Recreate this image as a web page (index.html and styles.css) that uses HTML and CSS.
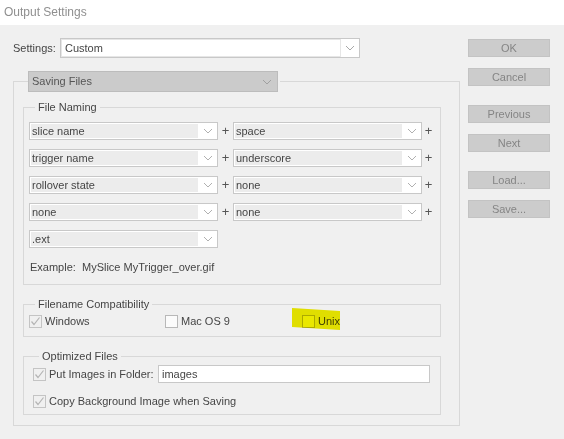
FILE: index.html
```html
<!DOCTYPE html>
<html>
<head>
<meta charset="utf-8">
<link rel="stylesheet" href="styles.css">
</head>
<body>
<div class="titlebar">Output Settings</div>
<div class="main">
  <div class="left">
    <div class="settings-row">
      <span class="settings-label">Settings:</span>
      <div class="combo combo-settings">
        <span class="combo-field">Custom</span>
        <span class="combo-arrow"><svg width="10" height="6" viewBox="0 0 10 6"><polyline points="1,1 5,5 9,1" fill="none" stroke="#a8a8a8" stroke-width="1"/></svg></span>
      </div>
    </div>
    <fieldset class="outer">
      <legend class="outer-legend">
        <div class="combo combo-saving">
          <span class="combo-field">Saving Files</span>
          <span class="combo-arrow"><svg width="10" height="6" viewBox="0 0 10 6"><polyline points="1,1 5,5 9,1" fill="none" stroke="#a0a0a0" stroke-width="1"/></svg></span>
        </div>
      </legend>
      <fieldset class="group naming">
        <legend class="glegend">File Naming</legend>
        <div class="name-grid">
          <div class="combo combo-name"><span class="combo-field">slice name</span><span class="combo-arrow"><svg width="10" height="6" viewBox="0 0 10 6"><polyline points="1,1 5,5 9,1" fill="none" stroke="#b0b0b0" stroke-width="1"/></svg></span></div>
          <span class="plus">+</span>
          <div class="combo combo-name"><span class="combo-field">space</span><span class="combo-arrow"><svg width="10" height="6" viewBox="0 0 10 6"><polyline points="1,1 5,5 9,1" fill="none" stroke="#b0b0b0" stroke-width="1"/></svg></span></div>
          <span class="plus">+</span>

          <div class="combo combo-name"><span class="combo-field">trigger name</span><span class="combo-arrow"><svg width="10" height="6" viewBox="0 0 10 6"><polyline points="1,1 5,5 9,1" fill="none" stroke="#b0b0b0" stroke-width="1"/></svg></span></div>
          <span class="plus">+</span>
          <div class="combo combo-name"><span class="combo-field">underscore</span><span class="combo-arrow"><svg width="10" height="6" viewBox="0 0 10 6"><polyline points="1,1 5,5 9,1" fill="none" stroke="#b0b0b0" stroke-width="1"/></svg></span></div>
          <span class="plus">+</span>

          <div class="combo combo-name"><span class="combo-field">rollover state</span><span class="combo-arrow"><svg width="10" height="6" viewBox="0 0 10 6"><polyline points="1,1 5,5 9,1" fill="none" stroke="#b0b0b0" stroke-width="1"/></svg></span></div>
          <span class="plus">+</span>
          <div class="combo combo-name"><span class="combo-field">none</span><span class="combo-arrow"><svg width="10" height="6" viewBox="0 0 10 6"><polyline points="1,1 5,5 9,1" fill="none" stroke="#b0b0b0" stroke-width="1"/></svg></span></div>
          <span class="plus">+</span>

          <div class="combo combo-name"><span class="combo-field">none</span><span class="combo-arrow"><svg width="10" height="6" viewBox="0 0 10 6"><polyline points="1,1 5,5 9,1" fill="none" stroke="#b0b0b0" stroke-width="1"/></svg></span></div>
          <span class="plus">+</span>
          <div class="combo combo-name"><span class="combo-field">none</span><span class="combo-arrow"><svg width="10" height="6" viewBox="0 0 10 6"><polyline points="1,1 5,5 9,1" fill="none" stroke="#b0b0b0" stroke-width="1"/></svg></span></div>
          <span class="plus">+</span>

          <div class="combo combo-name"><span class="combo-field">.ext</span><span class="combo-arrow"><svg width="10" height="6" viewBox="0 0 10 6"><polyline points="1,1 5,5 9,1" fill="none" stroke="#b0b0b0" stroke-width="1"/></svg></span></div>
        </div>
        <div class="example">Example:&nbsp; MySlice MyTrigger_over.gif</div>
      </fieldset>
      <fieldset class="group compat">
        <legend class="glegend">Filename Compatibility</legend>
        <div class="compat-row">
          <label class="check"><span class="box checked"><svg width="11" height="11" viewBox="0 0 11 11"><polyline points="1.5,5.5 4,8.5 9.5,1.5" fill="none" stroke="#b4b4b4" stroke-width="1.2"/></svg></span>Windows</label>
          <label class="check"><span class="box empty"></span>Mac OS 9</label>
          <label class="check unix"><span class="box empty"></span>Unix<svg class="highlight" width="50" height="24" viewBox="0 0 50 24"><polygon points="0,0 48,3 48,22 0,19" fill="#eeec00"/></svg></label>
        </div>
      </fieldset>
      <fieldset class="group optimized">
        <legend class="glegend">Optimized Files</legend>
        <div class="opt-row">
          <label class="check"><span class="box checked"><svg width="11" height="11" viewBox="0 0 11 11"><polyline points="1.5,5.5 4,8.5 9.5,1.5" fill="none" stroke="#b4b4b4" stroke-width="1.2"/></svg></span>Put Images in Folder:</label>
          <div class="textfield">images</div>
        </div>
        <div class="opt-row2">
          <label class="check"><span class="box checked"><svg width="11" height="11" viewBox="0 0 11 11"><polyline points="1.5,5.5 4,8.5 9.5,1.5" fill="none" stroke="#b4b4b4" stroke-width="1.2"/></svg></span>Copy Background Image when Saving</label>
        </div>
      </fieldset>
    </fieldset>
  </div>
  <div class="buttons">
    <div class="btn">OK</div>
    <div class="btn">Cancel</div>
    <div class="btn sep">Previous</div>
    <div class="btn">Next</div>
    <div class="btn sep">Load...</div>
    <div class="btn">Save...</div>
  </div>
</div>
</body>
</html>
```
FILE: styles.css
```css
* { box-sizing: border-box; }
html, body {
  margin: 0;
  padding: 0;
  background: #f0f0f0;
  width: 564px;
  height: 439px;
  overflow: hidden;
  font-family: "Liberation Sans", Arial, sans-serif;
  font-size: 11px;
  color: #454545;
}
.titlebar {
  height: 25px;
  background: #ffffff;
  color: #8f8f8f;
  font-size: 12px;
  line-height: 24px;
  padding-left: 4px;
}
.main {
  display: flex;
  align-items: flex-start;
}
.left {
  width: 460px;
  padding-left: 13px;
}
.settings-row {
  display: flex;
  align-items: center;
  margin-top: 13px;
  height: 20px;
}
.settings-label {
  width: 47px;
  line-height: 16px;
  white-space: nowrap;
}
.combo {
  display: flex;
  border: 1px solid #c8c8c8;
  background: #ffffff;
  line-height: 14px;
}
.combo-field {
  flex: 1;
  white-space: nowrap;
  overflow: hidden;
}
.combo-arrow {
  display: flex;
  align-items: center;
  justify-content: center;
}
.combo-settings {
  width: 300px;
  height: 20px;
}
.combo-settings .combo-field {
  border: 1px solid #e6e6e6;
  padding-left: 3px;
  line-height: 16px;
}
.combo-settings .combo-arrow { width: 18px; }

.outer {
  width: 447px;
  margin: 13px 0 0 0;
  border: 1px solid #d8d8d8;
  padding: 7px 9px 10px 9px;
  min-width: 0;
}
.outer-legend {
  margin-left: 5px;
  padding: 0 2px 0 0;
}
.combo-saving {
  width: 250px;
  height: 21px;
  background: #cbcbcb;
  border-color: #bcbcbc;
  color: #555555;
}
.combo-saving .combo-field {
  padding-left: 3px;
  line-height: 19px;
}
.combo-saving .combo-arrow { width: 20px; }

.group {
  width: 418px;
  margin: 0;
  border: 1px solid #d8d8d8;
  padding: 0 5px;
  min-width: 0;
}
.glegend {
  margin-left: 6px;
  padding: 0 3px;
  line-height: 16px;
}
.naming { padding-top: 7px; padding-bottom: 9px; }
.name-grid {
  display: grid;
  grid-template-columns: 189px 15px 189px 13px;
  row-gap: 9px;
  align-items: center;
}
.combo-name {
  height: 18px;
}
.combo-name .combo-field {
  background: #ececec;
  margin: 1px 0 1px 1px;
  padding-left: 1px;
  line-height: 14px;
}
.combo-name .combo-arrow { width: 19px; }
.plus {
  text-align: center;
  color: #555;
  font-size: 13px;
  line-height: 16px;
}
.example {
  margin-top: 11px;
  padding-left: 1px;
  line-height: 16px;
}
.compat {
  margin-top: 11px;
  padding-top: 1px;
  padding-bottom: 7px;
}
.compat-row {
  display: grid;
  grid-template-columns: 136px 137px auto;
  height: 16px;
  align-items: center;
}
.check {
  display: flex;
  align-items: center;
  line-height: 16px;
  white-space: nowrap;
}
.box {
  width: 13px;
  height: 13px;
  border: 1px solid #c4c4c4;
  margin-right: 3px;
  display: flex;
  align-items: center;
  justify-content: center;
  flex-shrink: 0;
}
.box.checked { background: #f0f0f0; }
.box.empty { background: #fbfbfb; border-color: #b8b8b8; }
.unix { position: relative; }
.highlight {
  position: absolute;
  left: -10px;
  top: -5px;
  mix-blend-mode: multiply;
  pointer-events: none;
}
.optimized {
  margin-top: 11px;
  padding: 1px 5px 5px 9px;
}
.opt-row {
  display: flex;
  align-items: center;
  height: 18px;
}
.opt-row .check { width: 125px; }
.textfield {
  width: 272px;
  height: 18px;
  border: 1px solid #c8c8c8;
  background: #ffffff;
  padding-left: 3px;
  line-height: 16px;
}
.opt-row2 {
  margin-top: 10px;
  height: 16px;
  display: flex;
  align-items: center;
}
.buttons {
  margin-left: 8px;
  padding-top: 14px;
  display: flex;
  flex-direction: column;
}
.btn {
  width: 82px;
  height: 18px;
  background: #cccccc;
  border: 1px solid #c3c3c3;
  color: #858585;
  text-align: center;
  line-height: 16px;
  margin-top: 11px;
}
.btn:first-child { margin-top: 0; }
.btn.sep { margin-top: 19px; }
```
